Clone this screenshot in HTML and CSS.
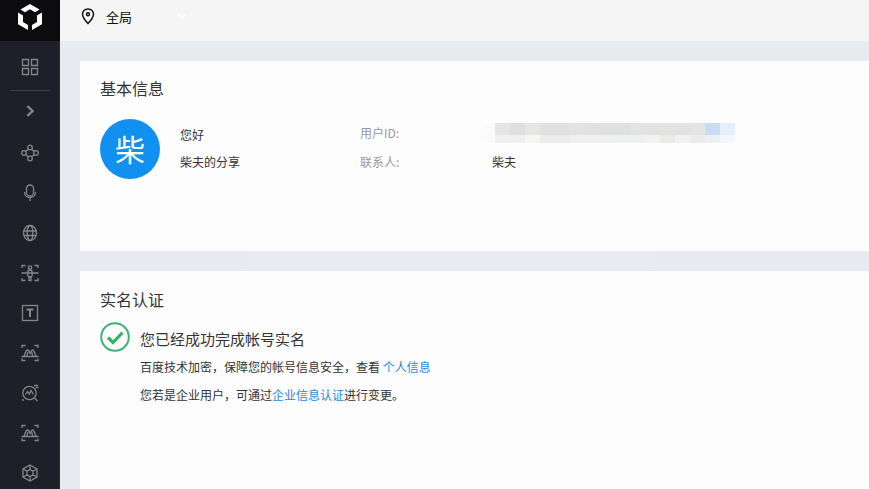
FILE: index.html
```html
<!DOCTYPE html>
<html lang="zh-CN">
<head>
<meta charset="utf-8">
<title>基本信息</title>
<link rel="stylesheet" href="styles.css">
</head>
<body>
<div class="app">
  <aside class="sidebar">
    <div class="logo">
      <svg width="26" height="28" viewBox="18 2 26 28"><path d="M31 3L40.500 8.500 36 11.200 31 8.300 26 11.200 21.500 8.500Z" fill="#fff"/><path d="M19 11.500L24 14.500V21L29 24V29L19 23.300Z" fill="#fff"/><path d="M43 11.500L38 14.500V21L33 24V29L43 23.300Z" fill="#fff"/></svg>
    </div>
    <nav class="menu">
      <div class="item"><svg class="ic" viewBox="0 0 18 18"><path d="M1.500 1.500h6v6h-6zM10.500 1.500h6v6h-6zM1.500 10.500h6v6h-6zM10.500 10.500h6v6h-6z"/></svg></div>
      <div class="divider"></div>
      <div class="item expand"><svg class="ic thick" viewBox="0 0 18 18"><path d="M6 3.500l6 5.500-6 5.500"/></svg></div>
      <div class="item"><svg class="ic" viewBox="0 0 18 18"><circle cx="9" cy="3.500" r="2.300"/><circle cx="9" cy="14.500" r="2.300"/><circle cx="3" cy="9" r="2.300"/><circle cx="15" cy="9" r="2.300"/><path d="M7.500 5.200L4.600 7.400M10.500 5.200l2.900 2.200M7.500 12.800L4.600 10.600M10.500 12.800l2.900-2.200"/></svg></div>
      <div class="item"><svg class="ic" viewBox="0 0 18 18"><rect x="5.500" y="1" width="7" height="11" rx="3.500"/><path d="M3.500 8c0 3.500 2.500 5.500 5.500 5.500s5.500-2 5.500-5.500M9 13.500V17"/></svg></div>
      <div class="item"><svg class="ic" viewBox="0 0 18 18"><ellipse cx="9" cy="9" rx="6.500" ry="7.500"/><ellipse cx="9" cy="9" rx="2.800" ry="7.500"/><path d="M2.500 7h13M3 11.500h12"/></svg></div>
      <div class="item"><svg class="ic" viewBox="0 0 18 18"><path d="M1 4V1.500h3.500M13.500 1.500H17V4M1 14v2.500h3.500M13.500 16.500H17V14M0.500 9h17"/><circle cx="9" cy="3.500" r="1.700"/><rect x="6.800" y="6" width="4.400" height="7" rx="2.200"/><path d="M8 13h2v3.500H8z"/></svg></div>
      <div class="item"><svg class="ic" viewBox="0 0 18 18"><rect x="1.500" y="1.500" width="15" height="15"/><path class="thickline" d="M5.500 5.500h7M9 5.500v7.500"/></svg></div>
      <div class="item"><svg class="ic" viewBox="0 0 18 18"><path d="M1 4V1.500h3.500M13.500 1.500H17V4M1 14.500v2h3.500M13.500 16.500H17v-2M0.500 12.500h17"/><path d="M3 12c1-1 1.500-6 3.500-6s2 3 2.500 3.500c.5-.5 1-3.500 2.500-3.500 2 0 2.500 5 3.500 6"/><path d="M6 12c.3-1 .4-3 .8-4M11.500 12c-.3-1-.4-3-.8-4"/></svg></div>
      <div class="item"><svg class="ic" viewBox="0 0 18 18"><circle cx="8.500" cy="9" r="6.700"/><path d="M13.500 14l3 3M4.500 10.500l2-3 2 2.500 1.500-3.500 2.500 4M13 1.500h4M15 3.500h2.500M1 16h2"/></svg></div>
      <div class="item"><svg class="ic" viewBox="0 0 18 18"><path d="M1 4V1.500h3.500M13.500 1.500H17V4M1 14.500v2h3.500M13.500 16.500H17v-2M0.500 12.500h17"/><path d="M3 12c1-1 1.500-6 3.500-6s2 3 2.500 3.500c.5-.5 1-3.500 2.500-3.500 2 0 2.500 5 3.500 6"/><path d="M6 12c.3-1 .4-3 .8-4M11.500 12c-.3-1-.4-3-.8-4"/></svg></div>
      <div class="item"><svg class="ic" viewBox="0 0 18 18"><path d="M9 1l7 4v8l-7 4-7-4V5z"/><path d="M9 5.500l3 1.700v3.600l-3 1.700-3-1.700V7.200zM9 1v4.500M16 5l-4 2.200M16 13l-4-2.200M9 17v-4.500M2 13l4-2.200M2 5l4 2.200"/></svg></div>
    </nav>
  </aside>
  <div class="main">
    <header class="topbar">
      <svg class="pin" width="14" height="17" viewBox="0 0 14 17"><path d="M7 1C3.700 1 1.500 3.400 1.500 6.300 1.500 9.800 7 15.500 7 15.500s5.500-5.700 5.500-9.200C12.500 3.400 10.300 1 7 1z"/><circle cx="7" cy="6.200" r="1.500"/></svg>
      <span class="scope">全局</span>
      <svg class="caret" width="12" height="8" viewBox="0 0 12 8"><path d="M2 2l4 4 4-4"/></svg>
    </header>
    <div class="content">
      <section class="card first">
        <h2 class="card-title">基本信息</h2>
        <div class="profile">
          <div class="avatar">柴</div>
          <div class="names">
            <div>您好</div>
            <div>柴夫的分享</div>
          </div>
          <div class="details">
            <div class="row"><span class="label">用户ID:</span><span class="masked"></span></div>
            <div class="row"><span class="label">联系人:</span><span class="value">柴夫</span></div>
          </div>
        </div>
      </section>
      <section class="card second">
        <h2 class="card-title">实名认证</h2>
        <div class="verified">
          <svg class="check" width="30" height="30" viewBox="0 0 30 30"><circle cx="15" cy="15" r="13.800"/><path d="M8 15.500l5 5 9.500-10"/></svg>
          <span>您已经成功完成帐号实名</span>
        </div>
        <p class="note first-note">百度技术加密，保障您的帐号信息安全，查看 <a class="link">个人信息</a></p>
        <p class="note">您若是企业用户，可通过<a class="link">企业信息认证</a>进行变更。</p>
      </section>
      <div class="smudge"></div>
    </div>
  </div>
</div>
</body>
</html>
```

FILE: styles.css
```css
* { box-sizing: border-box; }
html, body { margin: 0; height: 100%; }
body {
  overflow: hidden;
  font-family: "Noto Sans CJK SC", "Liberation Sans", sans-serif;
  color: #333;
}
.app { display: flex; width: 869px; height: 489px; overflow: hidden; }

.sidebar { width: 60px; flex: none; background: #1e1f29; border-right: 1px solid #2a2b35; }
.logo { height: 41px; margin-right: -1px; background: #0c0c0e; display: flex; align-items: center; justify-content: center; padding-bottom: 8px; }
.menu { display: flex; flex-direction: column; align-items: center; padding-top: 6px; }
.item { height: 40px; width: 100%; flex: none; display: flex; align-items: center; justify-content: center; }
.divider { width: 40px; height: 1px; background: #3b3c46; margin-top: 3px; flex: none; }
.expand { margin-bottom: 1px; }
.item:nth-child(4) { margin-top: 1px; }
.ic { width: 18px; height: 18px; fill: none; stroke: #85868c; stroke-width: 1.300; }
.thick { stroke-width: 2.600; width: 16px; height: 16px; }
.thickline { stroke-width: 2; }

.main { flex: 1; min-width: 0; display: flex; flex-direction: column; }
.topbar { height: 41px; flex: none; background: #f5f5f6; display: flex; align-items: center; padding: 0 0 9px 21px; }
.pin { fill: none; stroke: #111; stroke-width: 1.500; }
.scope { margin-left: 11px; font-size: 13px; color: #111; }
.caret { margin-left: 44px; fill: none; stroke: #fff; stroke-width: 1.500; }

.content { position: relative; flex: 1; background: #e7eaee; padding: 20px 0 0 20px; display: flex; flex-direction: column; gap: 20px; overflow: hidden; }
.card { background: #fdfdfe; padding: 17px 20px 0; flex: none; }
.first { height: 190px; }
.second { height: 218px; padding-top: 18px; }
.card-title { margin: 0; font-size: 16px; font-weight: 400; line-height: 21px; color: #333; }

.profile { display: flex; margin-top: 20px; }
.avatar { width: 60px; height: 60px; border-radius: 50%; background: #1190f0; color: #fff; font-size: 30px; line-height: 58px; text-align: center; flex: none; }
.names { width: 180px; margin-left: 20px; padding-top: 7px; font-size: 12px; line-height: 18px; display: flex; flex-direction: column; gap: 9px; }
.details { padding-top: 3px; font-size: 12px; display: flex; flex-direction: column; }
.row { display: flex; align-items: center; height: 20px; }
.row + .row { margin-top: 9px; }
.label { width: 120px; color: #999; flex: none; }
.value { margin-left: 12px; color: #333; }
.masked {
  display: block; width: 255px; height: 20px; margin-top: 2px; border-radius: 10px 0 0 10px;
  background:
    linear-gradient(90deg, #fafafa 0 15px, #e5e5e3 15px 30px, #dfdfe1 30px 45px, #e5e5e3 45px 60px, #e1e1e1 60px 90px, #e3e3e5 90px 105px, #e3e1de 105px 120px, #dfe0e2 120px 150px, #e2e3e5 150px 165px, #e4e2df 165px 180px, #e2e2e1 180px 210px, #e4e4e5 210px 225px, #c8dcf6 225px 240px, #e6eefb 240px 255px) top / 100% 12px no-repeat,
    linear-gradient(90deg, #fafafa 0 15px, #f0f0f0 15px 30px, #eeefee 30px 45px, #f5f5f3 45px 60px, #ececeb 60px 90px, #eff0f0 90px 135px, #eeefef 135px 165px, #f1f2f1 165px 180px, #ebeae9 180px 195px, #f0f1f0 195px 210px, #ebebeb 210px 225px, #eef0ef 225px 240px, #f3f6fc 240px 255px) bottom / 100% 8px no-repeat;
}

.verified { display: flex; align-items: center; margin-top: 12px; font-size: 15px; color: #333; }
.verified span { position: relative; top: 1px; }
.check { flex: none; margin-right: 10px; fill: none; stroke: #3cb371; stroke-width: 2; }
.check path { stroke: #35b163; stroke-width: 3.200; }
.note { margin: 0; padding-left: 40px; font-size: 12px; line-height: 18px; color: #333; margin-top: 10px; }
.first-note { margin-top: 6px; }
.link { color: #1e88e5; }

.smudge { position: absolute; left: 190px; top: 207px; width: 400px; height: 20px; background: #fdfdfe; opacity: .08; filter: blur(5px); }
```
